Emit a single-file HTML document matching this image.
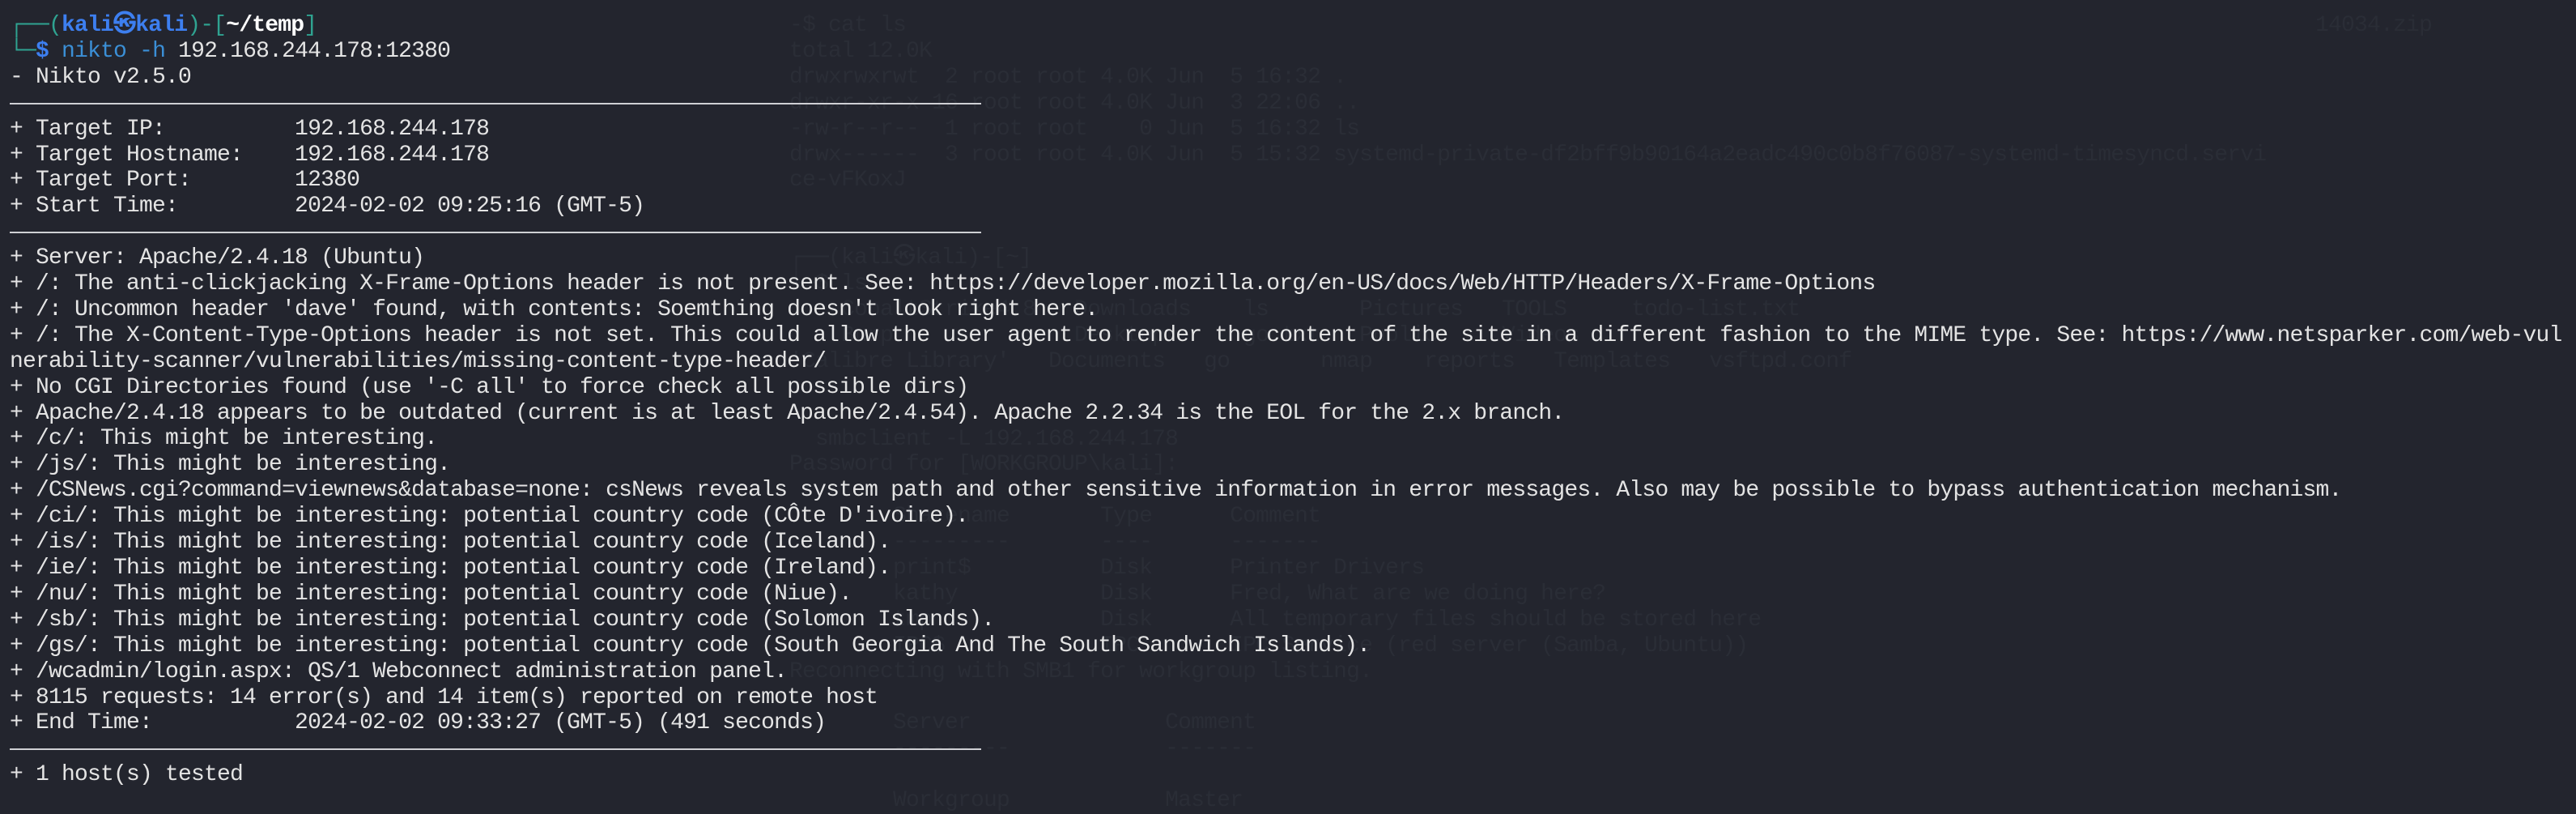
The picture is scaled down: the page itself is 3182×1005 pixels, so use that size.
<!DOCTYPE html>
<html><head><meta charset="utf-8"><style>
html,body{margin:0;padding:0}
body{width:3182px;height:993px;background:#23252e;overflow:hidden;position:relative;font-family:"Liberation Mono","DejaVu Sans Mono",monospace;}
.t{position:absolute;left:12px;top:16px;font-size:28px;letter-spacing:-0.8px;line-height:31.9px;color:#e4e4e4;white-space:pre;}
.g{position:absolute;font-size:28px;letter-spacing:-0.8px;line-height:31.9px;color:#2a2d36;white-space:pre;}
.sep{display:block;height:31.9px;position:relative}
.sep:after{content:"";position:absolute;left:0;top:15px;width:1200px;height:2px;background:#cfd0d4}
.c{color:#2fa391}.b{color:#3d7ff0;font-weight:bold}.w{color:#fff;font-weight:bold}.n{color:#3b8fd6}
</style></head><body>
<div class="g" style="left:975px;top:16px">-$ cat ls
total 12.0K
drwxrwxrwt  2 root root 4.0K Jun  5 16:32 .
drwxr-xr-x 16 root root 4.0K Jun  3 22:06 ..
-rw-r--r--  1 root root    0 Jun  5 16:32 ls
drwx------  3 root root 4.0K Jun  5 15:32 systemd-private-df2bff9b90164a2eadc490c0b8f76087-systemd-timesyncd.servi
ce-vFKoxJ


┌──(kali㉿kali)-[~]
└─$ ls
    CobaltStrike4.8   Downloads    ls       Pictures   TOOLS     todo-list.txt
    Burp              Desktop      go.txt   Public     Videos
'Calibre Library'   Documents   go       nmap    reports   Templates   vsftpd.conf


  smbclient -L 192.168.244.178
Password for [WORKGROUP\kali]:

        Sharename       Type      Comment
        ---------       ----      -------
        print$          Disk      Printer Drivers
        kathy           Disk      Fred, What are we doing here?
        tmp             Disk      All temporary files should be stored here
        IPC$            IPC       IPC Service (red server (Samba, Ubuntu))
Reconnecting with SMB1 for workgroup listing.

        Server               Comment
        ---------            -------

        Workgroup            Master</div>
<div class="g" style="left:2860px;top:16px">14034.zip</div>
<div class="t"><span class="c">┌──(</span><span class="b">kali㉿kali</span><span class="c">)-[</span><span class="w">~/temp</span><span class="c">]</span>
<span class="c">└─</span><span class="b">$</span> <span class="n">nikto -h</span> 192.168.244.178:12380
- Nikto v2.5.0
<span class="sep"></span>+ Target IP:          192.168.244.178
+ Target Hostname:    192.168.244.178
+ Target Port:        12380
+ Start Time:         2024-02-02 09:25:16 (GMT-5)
<span class="sep"></span>+ Server: Apache/2.4.18 (Ubuntu)
+ /: The anti-clickjacking X-Frame-Options header is not present. See: https://developer.mozilla.org/en-US/docs/Web/HTTP/Headers/X-Frame-Options
+ /: Uncommon header 'dave' found, with contents: Soemthing doesn't look right here.
+ /: The X-Content-Type-Options header is not set. This could allow the user agent to render the content of the site in a different fashion to the MIME type. See: https://www.netsparker.com/web-vul
nerability-scanner/vulnerabilities/missing-content-type-header/
+ No CGI Directories found (use '-C all' to force check all possible dirs)
+ Apache/2.4.18 appears to be outdated (current is at least Apache/2.4.54). Apache 2.2.34 is the EOL for the 2.x branch.
+ /c/: This might be interesting.
+ /js/: This might be interesting.
+ /CSNews.cgi?command=viewnews&amp;database=none: csNews reveals system path and other sensitive information in error messages. Also may be possible to bypass authentication mechanism.
+ /ci/: This might be interesting: potential country code (CÔte D'ivoire).
+ /is/: This might be interesting: potential country code (Iceland).
+ /ie/: This might be interesting: potential country code (Ireland).
+ /nu/: This might be interesting: potential country code (Niue).
+ /sb/: This might be interesting: potential country code (Solomon Islands).
+ /gs/: This might be interesting: potential country code (South Georgia And The South Sandwich Islands).
+ /wcadmin/login.aspx: QS/1 Webconnect administration panel.
+ 8115 requests: 14 error(s) and 14 item(s) reported on remote host
+ End Time:           2024-02-02 09:33:27 (GMT-5) (491 seconds)
<span class="sep"></span>+ 1 host(s) tested</div>
</body></html>
